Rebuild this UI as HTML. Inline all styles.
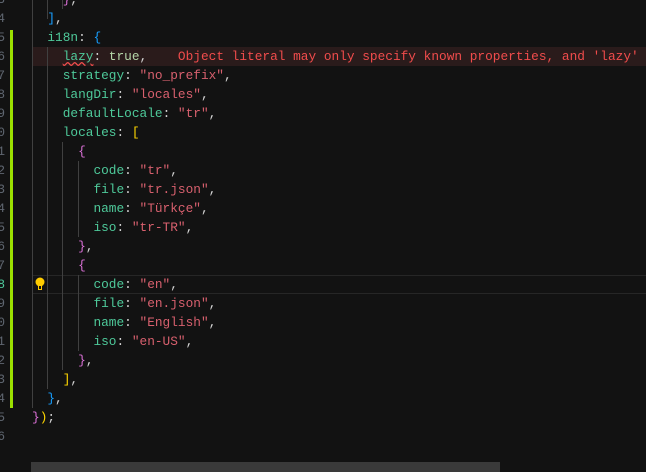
<!DOCTYPE html>
<html><head><style>
body{margin:0;width:646px;height:472px;background:#121212;overflow:hidden;position:relative;font-family:"Liberation Mono",monospace;font-size:12.8px}
.l{position:absolute;left:0;height:19px;line-height:19px;white-space:pre;width:646px}
.n{position:absolute;left:-33px;width:38px;text-align:right;color:#5f6670}
.c{position:absolute;left:32px;color:#d4d4d4}
.p{color:#4ec99a}.s{color:#d8606e}.b{color:#b5d6a8}
.bl{color:#179fff}.g{color:#ffd700}.pu{color:#da70d6}.e{color:#f14c4c}
.guide{position:absolute;width:1px;background:#404040}
</style></head><body>
<div style="position:absolute;left:32px;top:47px;width:614px;height:19px;background:#2a1b1b"></div>
<div style="position:absolute;left:32px;top:275px;width:614px;height:17px;border-top:1px solid #262626;border-bottom:1px solid #262626"></div>
<div style="position:absolute;left:10px;top:30px;width:3px;height:378px;background:#9be000"></div>
<div class="guide" style="left:32px;top:0;height:408px"></div>
<div class="guide" style="left:47px;top:47px;height:342px"></div>
<div class="guide" style="left:62px;top:142px;height:228px"></div>
<div class="guide" style="left:78px;top:161px;height:76px"></div>
<div class="guide" style="left:78px;top:275px;height:76px"></div>
<div class="guide" style="left:47px;top:0;height:19px"></div>
<div class="guide" style="left:62px;top:0;height:9px"></div>

<div class="l" style="top:-10px"><span class="n">3</span><span class="c">    <span class="pu">}</span>,</span></div>
<div class="l" style="top:9px"><span class="n">4</span><span class="c">  <span class="bl">]</span>,</span></div>
<div class="l" style="top:28px"><span class="n">5</span><span class="c">  <span class="p">i18n</span>: <span class="bl">{</span></span></div>
<div class="l" style="top:47px"><span class="n">6</span><span class="c">    <span class="p" style="text-decoration:underline wavy #f14c4c">lazy</span>: <span class="b">true</span>,    <span class="e">Object literal may only specify known properties, and 'lazy'</span></span></div>
<div class="l" style="top:66px"><span class="n">7</span><span class="c">    <span class="p">strategy</span>: <span class="s">"no_prefix"</span>,</span></div>
<div class="l" style="top:85px"><span class="n">8</span><span class="c">    <span class="p">langDir</span>: <span class="s">"locales"</span>,</span></div>
<div class="l" style="top:104px"><span class="n">9</span><span class="c">    <span class="p">defaultLocale</span>: <span class="s">"tr"</span>,</span></div>
<div class="l" style="top:123px"><span class="n">0</span><span class="c">    <span class="p">locales</span>: <span class="g">[</span></span></div>
<div class="l" style="top:142px"><span class="n">1</span><span class="c">      <span class="pu">{</span></span></div>
<div class="l" style="top:161px"><span class="n">2</span><span class="c">        <span class="p">code</span>: <span class="s">"tr"</span>,</span></div>
<div class="l" style="top:180px"><span class="n">3</span><span class="c">        <span class="p">file</span>: <span class="s">"tr.json"</span>,</span></div>
<div class="l" style="top:199px"><span class="n">4</span><span class="c">        <span class="p">name</span>: <span class="s">"Türkçe"</span>,</span></div>
<div class="l" style="top:218px"><span class="n">5</span><span class="c">        <span class="p">iso</span>: <span class="s">"tr-TR"</span>,</span></div>
<div class="l" style="top:237px"><span class="n">6</span><span class="c">      <span class="pu">}</span>,</span></div>
<div class="l" style="top:256px"><span class="n">7</span><span class="c">      <span class="pu">{</span></span></div>
<div class="l" style="top:275px"><span class="n" style="color:#4ec99a">8</span><span class="c">        <span class="p">code</span>: <span class="s">"en"</span>,</span></div>
<div class="l" style="top:294px"><span class="n">9</span><span class="c">        <span class="p">file</span>: <span class="s">"en.json"</span>,</span></div>
<div class="l" style="top:313px"><span class="n">0</span><span class="c">        <span class="p">name</span>: <span class="s">"English"</span>,</span></div>
<div class="l" style="top:332px"><span class="n">1</span><span class="c">        <span class="p">iso</span>: <span class="s">"en-US"</span>,</span></div>
<div class="l" style="top:351px"><span class="n">2</span><span class="c">      <span class="pu">}</span>,</span></div>
<div class="l" style="top:370px"><span class="n">3</span><span class="c">    <span class="g">]</span>,</span></div>
<div class="l" style="top:389px"><span class="n">4</span><span class="c">  <span class="bl">}</span>,</span></div>
<div class="l" style="top:408px"><span class="n">5</span><span class="c"><span class="pu">}</span><span class="g">)</span>;</span></div>
<div class="l" style="top:427px"><span class="n">6</span></div>

<svg style="position:absolute;left:34px;top:277px" width="12" height="14" viewBox="0 0 12 14"><circle cx="6" cy="5" r="4.5" fill="#ffcc00"/><rect x="4" y="8" width="4" height="5" fill="#ffcc00"/><rect x="5" y="9" width="2" height="3" fill="#121212"/></svg>
<div style="position:absolute;left:31px;top:462px;width:469px;height:10px;background:#3a3a3a"></div>
</body></html>
